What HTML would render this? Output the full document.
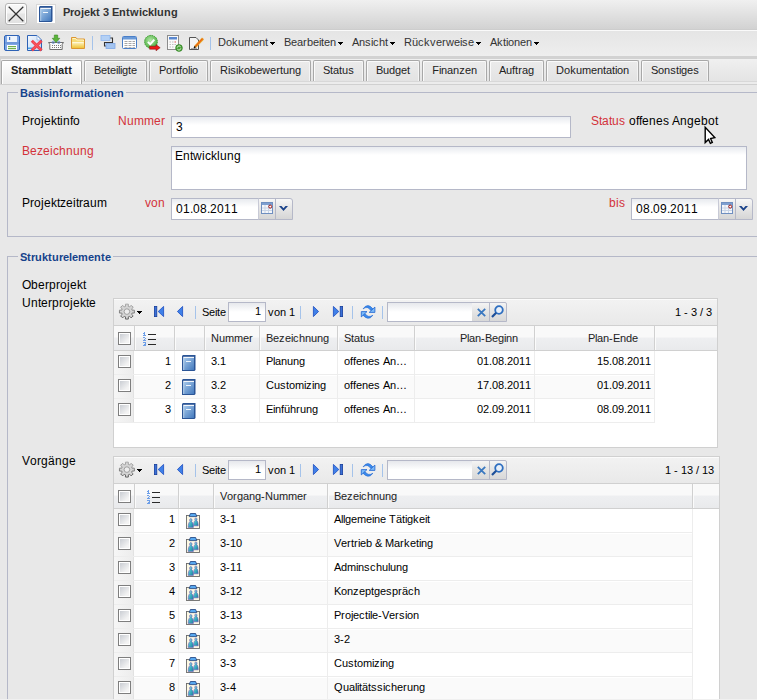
<!DOCTYPE html>
<html><head><meta charset="utf-8"><style>
*{box-sizing:border-box}
html,body{margin:0;padding:0}
body{width:757px;height:700px;overflow:hidden;position:relative;background:#e8e8e8;font-family:"Liberation Sans",sans-serif;font-size:12px;color:#000}
.a{position:absolute}
.t{position:absolute;white-space:nowrap;line-height:14px;font-size:12px}
.s{position:absolute;white-space:nowrap;line-height:13px;font-size:11px}
.b{font-weight:bold}
.red{color:#d3323a}
.r{text-align:right}
svg{position:absolute;overflow:visible}
i{display:inline-block;font-style:normal}
.w0{width:0px}.w1{width:1px}.w2{width:2px}.w3{width:3px}.w4{width:4px}.w5{width:5px}.w6{width:6px}.w7{width:7px}.w8{width:8px}.w9{width:9px}.w10{width:10px}.w11{width:11px}.w12{width:12px}.w13{width:13px}.w14{width:14px}.w15{width:15px}.w16{width:16px}.w17{width:17px}.w18{width:18px}.w19{width:19px}
</style></head><body>
<div class="a" style="left:0px;top:0px;width:757px;height:30px;background:linear-gradient(#f0f0f0,#d2d2d2);border-bottom:1px solid #cdcdcd"></div>
<div class="a" style="left:5px;top:3px;width:22px;height:22px;border:1px solid #b4b4b4;border-radius:3px;box-shadow:inset 0 0 0 1px #fff;background:linear-gradient(#f8f8f8 0,#f2f2f2 45%,#e6e6e6 50%,#e2e2e2 100%)"></div>
<svg style="left:5px;top:3px" width="22" height="22" viewBox="0 0 22 22"><path d="M3.7 3.7L18.3 18.3M18.3 3.7L3.7 18.3" stroke="#333" stroke-width="1.25"/></svg>
<div class="a" style="left:36px;top:4px;width:20px;height:20px;background:#fff;border:1px solid #d8d8d8"></div>
<svg style="left:39px;top:6px" width="14" height="16" viewBox="0 0 14 16"><defs><linearGradient id="bk" x1="0" y1="0" x2="1" y2="1"><stop offset="0" stop-color="#a6c8ea"/><stop offset="1" stop-color="#4379bd"/></linearGradient></defs><path d="M1 0H13.5V15L12.5 16H0V1Z" fill="#2b5596"/><rect x="1.2" y="1.8" width="10.8" height="1.2" fill="#f2f6fb"/><rect x="1.2" y="3" width="10.8" height="12" fill="url(#bk)"/><rect x="1.2" y="3" width="1" height="12" fill="#cfe2f5" opacity="0.7"/><rect x="4" y="6" width="5" height="1" fill="#eef5fc"/></svg>
<div class="s b" style="left:63px;top:6px;color:#333"><i class=w7>P</i><i class=w4>r</i><i class=w7>o</i><i class=w3>j</i><i class=w6>e</i><i class=w6>k</i><i class=w4>t</i><i class=w3> </i><i class=w6>3</i><i class=w3> </i><i class=w7>E</i><i class=w7>n</i><i class=w4>t</i><i class=w9>w</i><i class=w3>i</i><i class=w6>c</i><i class=w6>k</i><i class=w3>l</i><i class=w7>u</i><i class=w7>n</i><i class=w7>g</i></div>
<div class="a" style="left:0px;top:30px;width:757px;height:26px;border-top:1px solid #fafafa;background:linear-gradient(#e5e5e5,#eeeeee)"></div>
<div class="a" style="left:0px;top:56px;width:757px;height:3px;background:#d2d2d2"></div>
<svg style="left:4px;top:35px" width="16" height="16" viewBox="0 0 16 16"><rect x="0.5" y="0.5" width="15" height="15" rx="1.5" fill="#7fa7e4" stroke="#2e62b5"/><rect x="3" y="1" width="10" height="6" fill="#eef4fc"/><rect x="5" y="2" width="1.2" height="3" fill="#3a6fc0"/><rect x="1" y="7" width="14" height="2" fill="#6f98da"/><rect x="3" y="10" width="10" height="5" fill="#ffffff"/><rect x="4" y="11" width="8" height="1.2" fill="#6fb04c"/><rect x="4" y="13" width="8" height="1.2" fill="#6fb04c"/></svg>
<svg style="left:27px;top:35px" width="16" height="16" viewBox="0 0 16 16"><defs><linearGradient id="dg" x1="0" y1="0" x2="1" y2="1"><stop offset="0" stop-color="#f4f8fe"/><stop offset="1" stop-color="#bcd6f4"/></linearGradient></defs><path d="M0.5 0.5H10L14.5 5V15.5H0.5Z" fill="url(#dg)" stroke="#2e62b5"/><path d="M10 0.8V5H14.2Z" fill="#ffffff" stroke="#8fb2e2" stroke-width="0.8"/><rect x="1" y="12.5" width="8" height="1.5" fill="#4aa3e8"/><path d="M4.8 5.8L14.6 15.4M14.6 5.8L4.8 15.4" stroke="#f2434f" stroke-width="3"/><path d="M6 7L13.4 14.2M13.4 7L6 14.2" stroke="#ff7a82" stroke-width="0.8" opacity="0.6"/></svg>
<svg style="left:48px;top:35px" width="16" height="15" viewBox="0 0 16 15"><path d="M0.5 7.5H15.5L14.2 9.3V14.5H1.8V9.3Z" fill="#fbfbfb" stroke="#6e6e6e"/><g fill="#7a7a7a"><rect x="4" y="10" width="1" height="1"/><rect x="6" y="10" width="1" height="1"/><rect x="8" y="10" width="1" height="1"/><rect x="10" y="10" width="1" height="1"/><rect x="12" y="10" width="1" height="1"/><rect x="4" y="12" width="1" height="1"/><rect x="6" y="12" width="1" height="1"/><rect x="8" y="12" width="1" height="1"/><rect x="10" y="12" width="1" height="1"/><rect x="12" y="12" width="1" height="1"/></g><circle cx="5.3" cy="7.4" r="1.2" fill="none" stroke="#5a8ad0" stroke-width="0.8"/><circle cx="10.7" cy="7.4" r="1.2" fill="none" stroke="#5a8ad0" stroke-width="0.8"/><path d="M6.3 0H9.7V3.3H11.8L8 7.5L4.2 3.3H6.3Z" fill="#5bb43a" stroke="#3a8a22" stroke-width="0.6"/></svg>
<svg style="left:71px;top:37px" width="14" height="13" viewBox="0 0 14 13"><defs><linearGradient id="fg" x1="0" y1="0" x2="0" y2="1"><stop offset="0" stop-color="#fdf3c0"/><stop offset="1" stop-color="#efc43a"/></linearGradient></defs><path d="M0.5 0.5H5L6.2 2H13.5V11.5H0.5Z" fill="#f6dc7a" stroke="#dc9632"/><path d="M1.5 1.5H4.6L5.6 3H12.5V4" fill="none" stroke="#fff6d0" stroke-width="0.9"/><path d="M1 5.2H13V11H1Z" fill="url(#fg)"/><path d="M1.5 5.6H12.5" stroke="#fffbe6" stroke-width="0.9"/></svg>
<div class="a" style="left:92px;top:36px;width:1px;height:14px;background:#a5c3ea"></div>
<svg style="left:100px;top:35px" width="16" height="14" viewBox="0 0 16 14"><path d="M10 3H12.5V7.5H4.5V11H6" fill="none" stroke="#333" stroke-width="1.1"/><rect x="1" y="0.5" width="9" height="5" fill="#b3d0f5" stroke="#8fb6ee" stroke-width="0.8"/><rect x="6" y="8.5" width="9" height="5" fill="#a3c4f0" stroke="#7fa8e6" stroke-width="0.8"/></svg>
<svg style="left:122px;top:36px" width="15" height="13" viewBox="0 0 15 13"><rect x="0.5" y="0.5" width="14" height="12" rx="1" fill="#fff" stroke="#4a7fc8"/><rect x="1" y="1" width="13" height="2.5" fill="#6a9ad8"/><g fill="#a8a8a8"><rect x="2.5" y="5" width="3" height="1"/><rect x="6.5" y="5" width="3" height="1"/><rect x="10.5" y="5" width="2.5" height="1"/><rect x="2.5" y="7" width="3" height="1"/><rect x="6.5" y="7" width="3" height="1"/><rect x="10.5" y="7" width="2.5" height="1"/><rect x="2.5" y="9" width="3" height="1"/><rect x="6.5" y="9" width="3" height="1"/><rect x="10.5" y="9" width="2.5" height="1"/><rect x="2.5" y="11" width="3" height="0.8"/><rect x="6.5" y="11" width="3" height="0.8"/><rect x="10.5" y="11" width="2.5" height="0.8"/></g></svg>
<svg style="left:144px;top:35px" width="17" height="16" viewBox="0 0 17 16"><defs><radialGradient id="cg" cx="0.45" cy="0.4" r="0.6"><stop offset="0" stop-color="#b4e8a8"/><stop offset="1" stop-color="#4fb043"/></radialGradient></defs><circle cx="7" cy="6.8" r="6.4" fill="url(#cg)" stroke="#3a9c2c" stroke-width="1" stroke-dasharray="1.6 0.7"/><path d="M3.9 6.9L6.2 9.2L10.3 4.6" fill="none" stroke="#fff" stroke-width="2"/><path d="M5.6 11.2H12V9.6L16.2 12.7L12 15.8V14.2H5.6Z" fill="#ee1a1a" stroke="#7a0a0a" stroke-width="0.5"/></svg>
<svg style="left:167px;top:35px" width="16" height="16" viewBox="0 0 16 16"><rect x="0.5" y="0.5" width="11" height="14" fill="#fafafa" stroke="#8c8c8c"/><rect x="2" y="2" width="8" height="2.5" fill="#5a88d0"/><g fill="#c0c0c0"><rect x="2.5" y="6.5" width="1.5" height="1"/><rect x="5" y="6.5" width="1.5" height="1"/><rect x="2.5" y="9" width="1.5" height="1"/><rect x="5" y="9" width="1.5" height="1"/><rect x="7.5" y="9" width="1.5" height="1"/><rect x="2.5" y="11.5" width="1.5" height="1"/><rect x="5" y="11.5" width="1.5" height="1"/></g><rect x="7.5" y="6.5" width="1.5" height="1" fill="#e05050"/><circle cx="12" cy="13" r="3.4" fill="#48a236" stroke="#2c7a1e" stroke-width="0.6"/><path d="M10.2 12.6A1.9 1.9 0 0 1 13.6 11.8M13.8 13.4A1.9 1.9 0 0 1 10.4 14.2" fill="none" stroke="#f0faea" stroke-width="0.9"/></svg>
<svg style="left:189px;top:37px" width="15" height="14" viewBox="0 0 15 14"><path d="M0.5 0.5H7L9.5 3V12.5H0.5Z" fill="#f4f4f4" stroke="#555"/><path d="M2 11.5H8" stroke="#aaa"/><path d="M6 10L14 1.5" stroke="#e8a020" stroke-width="2.6"/><path d="M6.2 9.6L13.6 1.7" stroke="#f04010" stroke-width="1"/><path d="M5.2 11L6.2 9.5" stroke="#111" stroke-width="1.5"/></svg>
<div class="a" style="left:210px;top:37px;width:1px;height:13px;background:#a5c3ea"></div>
<div class="s" style="left:218px;top:36px;color:#333"><i class=w8>D</i><i class=w6>o</i><i class=w6>k</i><i class=w6>u</i><i class=w9>m</i><i class=w6>e</i><i class=w6>n</i><i class=w3>t</i></div>
<svg style="left:270px;top:42px" width="5" height="3" viewBox="0 0 5 3"><g shape-rendering="crispEdges" fill="#000"><rect x="0" y="0" width="5" height="1"/><rect x="1" y="1" width="3" height="1"/><rect x="2" y="2" width="1" height="1"/></g></svg>
<div class="s" style="left:284px;top:36px;color:#333"><i class=w7>B</i><i class=w6>e</i><i class=w6>a</i><i class=w4>r</i><i class=w6>b</i><i class=w6>e</i><i class=w2>i</i><i class=w3>t</i><i class=w6>e</i><i class=w6>n</i></div>
<svg style="left:338px;top:42px" width="5" height="3" viewBox="0 0 5 3"><g shape-rendering="crispEdges" fill="#000"><rect x="0" y="0" width="5" height="1"/><rect x="1" y="1" width="3" height="1"/><rect x="2" y="2" width="1" height="1"/></g></svg>
<div class="s" style="left:352px;top:36px;color:#333"><i class=w7>A</i><i class=w6>n</i><i class=w6>s</i><i class=w2>i</i><i class=w6>c</i><i class=w6>h</i><i class=w3>t</i></div>
<svg style="left:390px;top:42px" width="5" height="3" viewBox="0 0 5 3"><g shape-rendering="crispEdges" fill="#000"><rect x="0" y="0" width="5" height="1"/><rect x="1" y="1" width="3" height="1"/><rect x="2" y="2" width="1" height="1"/></g></svg>
<div class="s" style="left:404px;top:36px;color:#333"><i class=w8>R</i><i class=w6>ü</i><i class=w6>c</i><i class=w6>k</i><i class=w6>v</i><i class=w6>e</i><i class=w4>r</i><i class=w8>w</i><i class=w6>e</i><i class=w2>i</i><i class=w6>s</i><i class=w6>e</i></div>
<svg style="left:476px;top:42px" width="5" height="3" viewBox="0 0 5 3"><g shape-rendering="crispEdges" fill="#000"><rect x="0" y="0" width="5" height="1"/><rect x="1" y="1" width="3" height="1"/><rect x="2" y="2" width="1" height="1"/></g></svg>
<div class="s" style="left:490px;top:36px;color:#333"><i class=w7>A</i><i class=w6>k</i><i class=w3>t</i><i class=w2>i</i><i class=w6>o</i><i class=w6>n</i><i class=w6>e</i><i class=w6>n</i></div>
<svg style="left:534px;top:42px" width="5" height="3" viewBox="0 0 5 3"><g shape-rendering="crispEdges" fill="#000"><rect x="0" y="0" width="5" height="1"/><rect x="1" y="1" width="3" height="1"/><rect x="2" y="2" width="1" height="1"/></g></svg>
<div class="a" style="left:0px;top:59px;width:757px;height:22px;background:linear-gradient(#f0f0f0,#e4e4e4)"></div>
<div class="a" style="left:0px;top:81px;width:757px;height:1px;background:#d8d8d8"></div>
<div class="a" style="left:0px;top:82px;width:757px;height:2px;background:#ececec"></div>
<div class="a" style="left:0px;top:84px;width:757px;height:1px;background:#d0d0d0"></div>
<div class="a" style="left:0px;top:59px;width:1px;height:26px;background:#d4d4d4"></div>
<div class="a" style="left:1px;top:60px;width:81px;height:24px;border:1px solid #a8a8a8;border-bottom:none;border-radius:2px 2px 0 0;box-shadow:inset 1px 1px 0 #fff,inset -1px 0 0 #fff;background:linear-gradient(#ffffff,#ebebeb)"></div>
<div class="s b" style="left:1px;top:64px;width:81px;text-align:center;color:#222"><i class=w7>S</i><i class=w4>t</i><i class=w6>a</i><i class=w10>m</i><i class=w10>m</i><i class=w7>b</i><i class=w3>l</i><i class=w6>a</i><i class=w4>t</i><i class=w4>t</i></div>
<div class="a" style="left:84px;top:60px;width:63px;height:21px;border:1px solid #a8a8a8;border-bottom:none;border-radius:2px 2px 0 0;box-shadow:inset 1px 1px 0 #fafafa,inset -1px 0 0 #f4f4f4;background:linear-gradient(#ebebeb,#e3e3e3)"></div>
<div class="s" style="left:84px;top:64px;width:63px;text-align:center;color:#222"><i class=w7>B</i><i class=w6>e</i><i class=w3>t</i><i class=w6>e</i><i class=w2>i</i><i class=w2>l</i><i class=w2>i</i><i class=w6>g</i><i class=w3>t</i><i class=w6>e</i></div>
<div class="a" style="left:149px;top:60px;width:59px;height:21px;border:1px solid #a8a8a8;border-bottom:none;border-radius:2px 2px 0 0;box-shadow:inset 1px 1px 0 #fafafa,inset -1px 0 0 #f4f4f4;background:linear-gradient(#ebebeb,#e3e3e3)"></div>
<div class="s" style="left:149px;top:64px;width:59px;text-align:center;color:#222"><i class=w7>P</i><i class=w6>o</i><i class=w4>r</i><i class=w3>t</i><i class=w3>f</i><i class=w6>o</i><i class=w2>l</i><i class=w2>i</i><i class=w6>o</i></div>
<div class="a" style="left:210px;top:60px;width:101px;height:21px;border:1px solid #a8a8a8;border-bottom:none;border-radius:2px 2px 0 0;box-shadow:inset 1px 1px 0 #fafafa,inset -1px 0 0 #f4f4f4;background:linear-gradient(#ebebeb,#e3e3e3)"></div>
<div class="s" style="left:210px;top:64px;width:101px;text-align:center;color:#222"><i class=w8>R</i><i class=w2>i</i><i class=w6>s</i><i class=w2>i</i><i class=w6>k</i><i class=w6>o</i><i class=w6>b</i><i class=w6>e</i><i class=w8>w</i><i class=w6>e</i><i class=w4>r</i><i class=w3>t</i><i class=w6>u</i><i class=w6>n</i><i class=w6>g</i></div>
<div class="a" style="left:313px;top:60px;width:51px;height:21px;border:1px solid #a8a8a8;border-bottom:none;border-radius:2px 2px 0 0;box-shadow:inset 1px 1px 0 #fafafa,inset -1px 0 0 #f4f4f4;background:linear-gradient(#ebebeb,#e3e3e3)"></div>
<div class="s" style="left:313px;top:64px;width:51px;text-align:center;color:#222"><i class=w7>S</i><i class=w3>t</i><i class=w6>a</i><i class=w3>t</i><i class=w6>u</i><i class=w6>s</i></div>
<div class="a" style="left:366px;top:60px;width:54px;height:21px;border:1px solid #a8a8a8;border-bottom:none;border-radius:2px 2px 0 0;box-shadow:inset 1px 1px 0 #fafafa,inset -1px 0 0 #f4f4f4;background:linear-gradient(#ebebeb,#e3e3e3)"></div>
<div class="s" style="left:366px;top:64px;width:54px;text-align:center;color:#222"><i class=w7>B</i><i class=w6>u</i><i class=w6>d</i><i class=w6>g</i><i class=w6>e</i><i class=w3>t</i></div>
<div class="a" style="left:422px;top:60px;width:65px;height:21px;border:1px solid #a8a8a8;border-bottom:none;border-radius:2px 2px 0 0;box-shadow:inset 1px 1px 0 #fafafa,inset -1px 0 0 #f4f4f4;background:linear-gradient(#ebebeb,#e3e3e3)"></div>
<div class="s" style="left:422px;top:64px;width:65px;text-align:center;color:#222"><i class=w7>F</i><i class=w2>i</i><i class=w6>n</i><i class=w6>a</i><i class=w6>n</i><i class=w6>z</i><i class=w6>e</i><i class=w6>n</i></div>
<div class="a" style="left:489px;top:60px;width:55px;height:21px;border:1px solid #a8a8a8;border-bottom:none;border-radius:2px 2px 0 0;box-shadow:inset 1px 1px 0 #fafafa,inset -1px 0 0 #f4f4f4;background:linear-gradient(#ebebeb,#e3e3e3)"></div>
<div class="s" style="left:489px;top:64px;width:55px;text-align:center;color:#222"><i class=w7>A</i><i class=w6>u</i><i class=w3>f</i><i class=w3>t</i><i class=w4>r</i><i class=w6>a</i><i class=w6>g</i></div>
<div class="a" style="left:546px;top:60px;width:93px;height:21px;border:1px solid #a8a8a8;border-bottom:none;border-radius:2px 2px 0 0;box-shadow:inset 1px 1px 0 #fafafa,inset -1px 0 0 #f4f4f4;background:linear-gradient(#ebebeb,#e3e3e3)"></div>
<div class="s" style="left:546px;top:64px;width:93px;text-align:center;color:#222"><i class=w8>D</i><i class=w6>o</i><i class=w6>k</i><i class=w6>u</i><i class=w9>m</i><i class=w6>e</i><i class=w6>n</i><i class=w3>t</i><i class=w6>a</i><i class=w3>t</i><i class=w2>i</i><i class=w6>o</i><i class=w6>n</i></div>
<div class="a" style="left:641px;top:60px;width:68px;height:21px;border:1px solid #a8a8a8;border-bottom:none;border-radius:2px 2px 0 0;box-shadow:inset 1px 1px 0 #fafafa,inset -1px 0 0 #f4f4f4;background:linear-gradient(#ebebeb,#e3e3e3)"></div>
<div class="s" style="left:641px;top:64px;width:68px;text-align:center;color:#222"><i class=w7>S</i><i class=w6>o</i><i class=w6>n</i><i class=w6>s</i><i class=w3>t</i><i class=w2>i</i><i class=w6>g</i><i class=w6>e</i><i class=w6>s</i></div>
<div class="a" style="left:7px;top:92px;width:760px;height:145px;border:1px solid #b5b8c8;border-right:none"></div>
<div class="s b" style="left:18px;top:87px;padding:0 2px;background:#e8e8e8;color:#15428b"><i class=w8>B</i><i class=w6>a</i><i class=w6>s</i><i class=w3>i</i><i class=w6>s</i><i class=w3>i</i><i class=w7>n</i><i class=w4>f</i><i class=w7>o</i><i class=w4>r</i><i class=w10>m</i><i class=w6>a</i><i class=w4>t</i><i class=w3>i</i><i class=w7>o</i><i class=w7>n</i><i class=w6>e</i><i class=w7>n</i></div>
<div class="t " style="left:22px;top:114px;"><i class=w8>P</i><i class=w4>r</i><i class=w7>o</i><i class=w3>j</i><i class=w7>e</i><i class=w6>k</i><i class=w3>t</i><i class=w3>i</i><i class=w7>n</i><i class=w3>f</i><i class=w7>o</i></div>
<div class="t red" style="left:118px;top:114px;"><i class=w9>N</i><i class=w7>u</i><i class=w10>m</i><i class=w10>m</i><i class=w7>e</i><i class=w4>r</i></div>
<div class="a" style="left:171px;top:116px;width:400px;height:22px;border:1px solid #b5b8c8;background:linear-gradient(#e8ebef,#fff 8px)"></div>
<div class="t " style="left:176px;top:120px;"><i class=w7>3</i></div>
<div class="t red" style="left:591px;top:114px;"><i class=w8>S</i><i class=w3>t</i><i class=w7>a</i><i class=w3>t</i><i class=w7>u</i><i class=w6>s</i></div>
<div class="t " style="left:629px;top:114px;"><i class=w7>o</i><i class=w3>f</i><i class=w3>f</i><i class=w7>e</i><i class=w7>n</i><i class=w7>e</i><i class=w6>s</i><i class=w3> </i><i class=w8>A</i><i class=w7>n</i><i class=w7>g</i><i class=w7>e</i><i class=w7>b</i><i class=w7>o</i><i class=w3>t</i></div>
<div class="t red" style="left:22px;top:144px;"><i class=w8>B</i><i class=w7>e</i><i class=w6>z</i><i class=w7>e</i><i class=w3>i</i><i class=w6>c</i><i class=w7>h</i><i class=w7>n</i><i class=w7>u</i><i class=w7>n</i><i class=w7>g</i></div>
<div class="a" style="left:171px;top:146px;width:576px;height:44px;border:1px solid #b5b8c8;background:linear-gradient(#e8ebef,#fff 8px)"></div>
<div class="t " style="left:175px;top:149px;"><i class=w8>E</i><i class=w7>n</i><i class=w3>t</i><i class=w9>w</i><i class=w3>i</i><i class=w6>c</i><i class=w6>k</i><i class=w3>l</i><i class=w7>u</i><i class=w7>n</i><i class=w7>g</i></div>
<div class="t " style="left:22px;top:196px;"><i class=w8>P</i><i class=w4>r</i><i class=w7>o</i><i class=w3>j</i><i class=w7>e</i><i class=w6>k</i><i class=w3>t</i><i class=w6>z</i><i class=w7>e</i><i class=w3>i</i><i class=w3>t</i><i class=w4>r</i><i class=w7>a</i><i class=w7>u</i><i class=w10>m</i></div>
<div class="t red" style="left:145px;top:196px;"><i class=w6>v</i><i class=w7>o</i><i class=w7>n</i></div>
<div class="t red" style="left:609px;top:196px;"><i class=w7>b</i><i class=w3>i</i><i class=w6>s</i></div>
<div class="a" style="left:171px;top:198px;width:88px;height:22px;border:1px solid #b5b8c8;background:linear-gradient(#e8ebef,#fff 8px)"></div>
<div class="t " style="left:176px;top:202px;"><i class=w7>0</i><i class=w7>1</i><i class=w3>.</i><i class=w7>0</i><i class=w7>8</i><i class=w3>.</i><i class=w7>2</i><i class=w7>0</i><i class=w7>1</i><i class=w7>1</i></div>
<div class="a" style="left:258px;top:198px;width:18px;height:22px;border:1px solid #b5b8c8;border-left:1px solid #c8cad6;background:linear-gradient(#f7f7f7,#e6e6e6 45%,#d6d6d6)"></div>
<svg style="left:261px;top:202px" width="12" height="12" viewBox="0 0 12 12"><rect x="0.5" y="0.5" width="11" height="11" fill="#f4f6fa" stroke="#6f8fc0"/><rect x="1" y="1" width="10" height="2" fill="#7d9fd0"/><g stroke="#c8d4e6" stroke-width="1"><path d="M4 3V11M7.5 3V11M1 6H11M1 8.5H11"/></g><circle cx="9.2" cy="4.6" r="1.5" fill="#fff" stroke="#9a1010" stroke-width="1"/></svg>
<div class="a" style="left:275px;top:198px;width:18px;height:22px;border:1px solid #b5b8c8;border-radius:0 3px 0 0;background:linear-gradient(#f7f7f7,#e6e6e6 45%,#d6d6d6)"></div>
<svg style="left:279px;top:206px" width="9" height="5" viewBox="0 0 9 5"><path d="M0 0H2.5L4.5 2.2L6.5 0H9L4.5 5Z" fill="#1a428a"/></svg>
<div class="a" style="left:631px;top:198px;width:88px;height:22px;border:1px solid #b5b8c8;background:linear-gradient(#e8ebef,#fff 8px)"></div>
<div class="t " style="left:636px;top:202px;"><i class=w7>0</i><i class=w7>8</i><i class=w3>.</i><i class=w7>0</i><i class=w7>9</i><i class=w3>.</i><i class=w7>2</i><i class=w7>0</i><i class=w7>1</i><i class=w7>1</i></div>
<div class="a" style="left:718px;top:198px;width:18px;height:22px;border:1px solid #b5b8c8;border-left:1px solid #c8cad6;background:linear-gradient(#f7f7f7,#e6e6e6 45%,#d6d6d6)"></div>
<svg style="left:721px;top:202px" width="12" height="12" viewBox="0 0 12 12"><rect x="0.5" y="0.5" width="11" height="11" fill="#f4f6fa" stroke="#6f8fc0"/><rect x="1" y="1" width="10" height="2" fill="#7d9fd0"/><g stroke="#c8d4e6" stroke-width="1"><path d="M4 3V11M7.5 3V11M1 6H11M1 8.5H11"/></g><circle cx="9.2" cy="4.6" r="1.5" fill="#fff" stroke="#9a1010" stroke-width="1"/></svg>
<div class="a" style="left:735px;top:198px;width:18px;height:22px;border:1px solid #b5b8c8;border-radius:0 3px 0 0;background:linear-gradient(#f7f7f7,#e6e6e6 45%,#d6d6d6)"></div>
<svg style="left:739px;top:206px" width="9" height="5" viewBox="0 0 9 5"><path d="M0 0H2.5L4.5 2.2L6.5 0H9L4.5 5Z" fill="#1a428a"/></svg>
<svg style="left:704px;top:126px" width="13" height="19" viewBox="0 0 13 19"><path d="M1.2 1.2V16.6L4.5 13.4L6.4 17.3L8.3 16.5L6.6 12.6L10.8 11.6Z" fill="#fff" stroke="#000" stroke-width="1.4" stroke-linejoin="miter"/></svg>
<div class="a" style="left:7px;top:256px;width:760px;height:460px;border:1px solid #b5b8c8;border-right:none"></div>
<div class="s b" style="left:18px;top:251px;padding:0 2px;background:#e8e8e8;color:#15428b"><i class=w7>S</i><i class=w4>t</i><i class=w4>r</i><i class=w7>u</i><i class=w6>k</i><i class=w4>t</i><i class=w7>u</i><i class=w4>r</i><i class=w6>e</i><i class=w3>l</i><i class=w6>e</i><i class=w10>m</i><i class=w6>e</i><i class=w7>n</i><i class=w4>t</i><i class=w6>e</i></div>
<div class="t " style="left:22px;top:278px;"><i class=w9>O</i><i class=w7>b</i><i class=w7>e</i><i class=w4>r</i><i class=w7>p</i><i class=w4>r</i><i class=w7>o</i><i class=w3>j</i><i class=w7>e</i><i class=w6>k</i><i class=w3>t</i></div>
<div class="t " style="left:22px;top:296px;"><i class=w9>U</i><i class=w7>n</i><i class=w3>t</i><i class=w7>e</i><i class=w4>r</i><i class=w7>p</i><i class=w4>r</i><i class=w7>o</i><i class=w3>j</i><i class=w7>e</i><i class=w6>k</i><i class=w3>t</i><i class=w7>e</i></div>
<div class="t " style="left:22px;top:454px;"><i class=w8>V</i><i class=w7>o</i><i class=w4>r</i><i class=w7>g</i><i class=w7>ä</i><i class=w7>n</i><i class=w7>g</i><i class=w7>e</i></div>
<div class="a" style="left:113px;top:298px;width:605px;height:462px;border:1px solid #d0d0d0;background:#fff"></div>
<div class="a" style="left:114px;top:299px;width:603px;height:27px;border-top:1px solid #fbfbfb;background:linear-gradient(#f2f2f2,#e9e9e9);border-bottom:1px solid #d0d0d0"></div>
<svg style="left:119px;top:304px" width="16" height="16" viewBox="0 0 16 16"><defs><linearGradient id="gg" x1="0" y1="0" x2="0" y2="1"><stop offset="0" stop-color="#aaaaaa"/><stop offset="1" stop-color="#5e5e5e"/></linearGradient></defs><g transform="translate(7.9,7.6)"><path d="M4.99 -2.07 L5.22 -1.40 L7.46 -1.45 L7.46 1.45 L5.22 1.40 L4.99 2.07 L4.68 2.70 L6.30 4.25 L4.25 6.30 L2.70 4.68 L2.07 4.99 L1.40 5.22 L1.45 7.46 L-1.45 7.46 L-1.40 5.22 L-2.07 4.99 L-2.70 4.68 L-4.25 6.30 L-6.30 4.25 L-4.68 2.70 L-4.99 2.07 L-5.22 1.40 L-7.46 1.45 L-7.46 -1.45 L-5.22 -1.40 L-4.99 -2.07 L-4.68 -2.70 L-6.30 -4.25 L-4.25 -6.30 L-2.70 -4.68 L-2.07 -4.99 L-1.40 -5.22 L-1.45 -7.46 L1.45 -7.46 L1.40 -5.22 L2.07 -4.99 L2.70 -4.68 L4.25 -6.30 L6.30 -4.25 L4.68 -2.70Z" fill="#d4d4d4" stroke="url(#gg)" stroke-width="1"/><circle r="2.8" fill="#ededed" stroke="#a0a0a0" stroke-width="1"/></g></svg>
<svg style="left:137px;top:311px" width="5" height="3" viewBox="0 0 5 3"><g shape-rendering="crispEdges" fill="#000"><rect x="0" y="0" width="5" height="1"/><rect x="1" y="1" width="3" height="1"/><rect x="2" y="2" width="1" height="1"/></g></svg>
<svg style="left:154px;top:306px" width="10" height="11" viewBox="0 0 10 11"><rect x="0.4" y="0.4" width="2.4" height="10.2" fill="#3a70d8" stroke="#173f9c" stroke-width="0.8"/><path d="M9.6 0.4V10.6L4.2 5.5Z" fill="#3f80e8" stroke="#1c4cc0" stroke-width="0.8" stroke-linejoin="round"/></svg>
<svg style="left:177px;top:306px" width="6" height="11" viewBox="0 0 6 11"><path d="M5.6 0.4V10.6L0.4 5.5Z" fill="#3f80e8" stroke="#1c4cc0" stroke-width="0.8" stroke-linejoin="round"/></svg>
<div class="a" style="left:195px;top:306px;width:1px;height:13px;background:#a5c3ea"></div>
<div class="s " style="left:202px;top:306px;"><i class=w7>S</i><i class=w6>e</i><i class=w2>i</i><i class=w3>t</i><i class=w6>e</i></div>
<div class="a" style="left:228px;top:302px;width:38px;height:20px;border:1px solid #b5b8c8;background:linear-gradient(#e6e8ec,#fff 9px)"></div>
<div class="s " style="right:496px;top:305px;"><i class=w6>1</i></div>
<div class="s " style="left:268px;top:306px;"><i class=w6>v</i><i class=w6>o</i><i class=w6>n</i><i class=w3> </i><i class=w6>1</i></div>
<div class="a" style="left:300px;top:306px;width:1px;height:13px;background:#a5c3ea"></div>
<svg style="left:313px;top:306px" width="6" height="11" viewBox="0 0 6 11"><path d="M0.4 0.4V10.6L5.6 5.5Z" fill="#3f80e8" stroke="#1c4cc0" stroke-width="0.8" stroke-linejoin="round"/></svg>
<svg style="left:333px;top:306px" width="10" height="11" viewBox="0 0 10 11"><path d="M0.4 0.4V10.6L5.8 5.5Z" fill="#3f80e8" stroke="#1c4cc0" stroke-width="0.8" stroke-linejoin="round"/><rect x="7.2" y="0.4" width="2.4" height="10.2" fill="#3a70d8" stroke="#173f9c" stroke-width="0.8"/></svg>
<div class="a" style="left:352px;top:306px;width:1px;height:13px;background:#a5c3ea"></div>
<svg style="left:359px;top:303px" width="17" height="17" viewBox="0 0 17 17"><path d="M4 5.9Q8.8 -1 14.4 6.4L11.8 7.6Q8.8 2.4 4 5.9Z" fill="#3a8aec" stroke="#1f64d0" stroke-width="0.6"/><path d="M15.9 4.1V9.4H10.2Z" fill="#7cbaf8" stroke="#1f64d0" stroke-width="0.8" stroke-linejoin="round"/><path d="M13.9 12.3Q9 19 2.8 10.8L5.6 10.2Q9.2 15.4 13.9 12.3Z" fill="#3a8aec" stroke="#1f64d0" stroke-width="0.6"/><path d="M2.3 13.9V8.6H8Z" fill="#7cbaf8" stroke="#1f64d0" stroke-width="0.8" stroke-linejoin="round"/></svg>
<div class="a" style="left:382px;top:306px;width:1px;height:13px;background:#a5c3ea"></div>
<div class="a" style="left:387px;top:302px;width:86px;height:20px;border:1px solid #b5b8c8;background:linear-gradient(#e6e8ec,#fff 9px)"></div>
<div class="a" style="left:472px;top:302px;width:18px;height:20px;border:1px solid #b5b8c8;border-left:none;background:linear-gradient(#f4f4f4,#e4e4e4 50%,#d8d8d8)"></div>
<svg style="left:477px;top:308px" width="9" height="9" viewBox="0 0 9 9"><path d="M0.8 0.8L8.2 8.2M8.2 0.8L0.8 8.2" stroke="#3a78c0" stroke-width="1.8"/></svg>
<div class="a" style="left:489px;top:302px;width:18px;height:20px;border:1px solid #b5b8c8;border-radius:0 2px 0 0;background:linear-gradient(#f4f4f4,#e4e4e4 50%,#d8d8d8)"></div>
<svg style="left:491px;top:305px" width="13" height="13" viewBox="0 0 13 13"><circle cx="8" cy="5" r="3.8" fill="#e8f0fa" stroke="#2f6fc0" stroke-width="1.8"/><path d="M5.2 7.8L1 12" stroke="#1d4f9a" stroke-width="2.2"/></svg>
<div class="s " style="right:45px;top:306px;"><i class=w6>1</i><i class=w3> </i><i class=w4>-</i><i class=w3> </i><i class=w6>3</i><i class=w3> </i><i class=w3>/</i><i class=w3> </i><i class=w6>3</i></div>
<div class="a" style="left:114px;top:326px;width:603px;height:25px;background:linear-gradient(#f9f9f9 0,#f9f9f9 46%,#eeeff1 50%,#e9eaec 100%);border-bottom:1px solid #d0d0d0"></div>
<div class="a" style="left:134px;top:326px;width:1px;height:24px;background:#d0d0d0"></div>
<div class="a" style="left:135px;top:326px;width:1px;height:24px;background:#fbfbfb"></div>
<div class="a" style="left:174px;top:326px;width:1px;height:24px;background:#d0d0d0"></div>
<div class="a" style="left:175px;top:326px;width:1px;height:24px;background:#fbfbfb"></div>
<div class="a" style="left:204px;top:326px;width:1px;height:24px;background:#d0d0d0"></div>
<div class="a" style="left:205px;top:326px;width:1px;height:24px;background:#fbfbfb"></div>
<div class="a" style="left:259px;top:326px;width:1px;height:24px;background:#d0d0d0"></div>
<div class="a" style="left:260px;top:326px;width:1px;height:24px;background:#fbfbfb"></div>
<div class="s " style="left:211px;top:332px;color:#222"><i class=w8>N</i><i class=w6>u</i><i class=w9>m</i><i class=w9>m</i><i class=w6>e</i><i class=w4>r</i></div>
<div class="a" style="left:337px;top:326px;width:1px;height:24px;background:#d0d0d0"></div>
<div class="a" style="left:338px;top:326px;width:1px;height:24px;background:#fbfbfb"></div>
<div class="s " style="left:266px;top:332px;color:#222"><i class=w7>B</i><i class=w6>e</i><i class=w6>z</i><i class=w6>e</i><i class=w2>i</i><i class=w6>c</i><i class=w6>h</i><i class=w6>n</i><i class=w6>u</i><i class=w6>n</i><i class=w6>g</i></div>
<div class="a" style="left:414px;top:326px;width:1px;height:24px;background:#d0d0d0"></div>
<div class="a" style="left:415px;top:326px;width:1px;height:24px;background:#fbfbfb"></div>
<div class="s " style="left:344px;top:332px;color:#222"><i class=w7>S</i><i class=w3>t</i><i class=w6>a</i><i class=w3>t</i><i class=w6>u</i><i class=w6>s</i></div>
<div class="a" style="left:534px;top:326px;width:1px;height:24px;background:#d0d0d0"></div>
<div class="a" style="left:535px;top:326px;width:1px;height:24px;background:#fbfbfb"></div>
<div class="s " style="right:239px;top:332px;color:#222"><i class=w7>P</i><i class=w2>l</i><i class=w6>a</i><i class=w6>n</i><i class=w4>-</i><i class=w7>B</i><i class=w6>e</i><i class=w6>g</i><i class=w2>i</i><i class=w6>n</i><i class=w6>n</i></div>
<div class="a" style="left:654px;top:326px;width:1px;height:24px;background:#d0d0d0"></div>
<div class="a" style="left:655px;top:326px;width:1px;height:24px;background:#fbfbfb"></div>
<div class="s " style="right:119px;top:332px;color:#222"><i class=w7>P</i><i class=w2>l</i><i class=w6>a</i><i class=w6>n</i><i class=w4>-</i><i class=w7>E</i><i class=w6>n</i><i class=w6>d</i><i class=w6>e</i></div>
<div class="a" style="left:118px;top:332px;width:13px;height:13px;border:1px solid #7e7e7e;box-shadow:inset 0 0 0 1px #fff;background:linear-gradient(135deg,#c4c8cf,#f4f4f4 75%)"></div>
<svg style="left:143px;top:332px" width="13" height="14" viewBox="0 0 13 14"><g fill="#6c9ee8" shape-rendering="crispEdges"><rect x="1" y="0" width="1" height="4"/><rect x="0" y="1" width="1" height="1"/><rect x="0" y="3" width="3" height="1"/><rect x="0" y="5" width="2" height="1"/><rect x="2" y="6" width="1" height="1"/><rect x="1" y="7" width="1" height="1"/><rect x="0" y="8" width="3" height="1"/><rect x="0" y="10" width="3" height="1"/><rect x="2" y="11" width="1" height="1"/><rect x="1" y="12" width="2" height="1"/><rect x="0" y="13" width="3" height="1"/></g><g fill="#2a2a2a" shape-rendering="crispEdges"><rect x="5" y="2" width="8" height="1"/><rect x="5" y="7" width="8" height="1"/><rect x="5" y="12" width="8" height="1"/></g></svg>
<div class="a" style="left:114px;top:351px;width:541px;height:24px;background:#fff;border-bottom:1px solid #ededed;border-top:1px solid #fff"></div>
<div class="a" style="left:114px;top:351px;width:20px;height:23px;background:linear-gradient(90deg,#f6f6f6,#ececec)"></div>
<div class="a" style="left:133px;top:351px;width:1px;height:23px;background:#e2e2e2"></div>
<div class="a" style="left:174px;top:351px;width:1px;height:23px;background:#ededed"></div>
<div class="a" style="left:204px;top:351px;width:1px;height:23px;background:#ededed"></div>
<div class="a" style="left:259px;top:351px;width:1px;height:23px;background:#ededed"></div>
<div class="a" style="left:337px;top:351px;width:1px;height:23px;background:#ededed"></div>
<div class="a" style="left:414px;top:351px;width:1px;height:23px;background:#ededed"></div>
<div class="a" style="left:534px;top:351px;width:1px;height:23px;background:#ededed"></div>
<div class="a" style="left:654px;top:351px;width:1px;height:23px;background:#ededed"></div>
<div class="a" style="left:118px;top:355px;width:13px;height:13px;border:1px solid #7e7e7e;box-shadow:inset 0 0 0 1px #fff;background:linear-gradient(135deg,#c4c8cf,#f4f4f4 75%)"></div>
<div class="s " style="right:586px;top:355px;"><i class=w6>1</i></div>
<svg style="left:182px;top:355px" width="14" height="16" viewBox="0 0 14 16"><defs><linearGradient id="bk" x1="0" y1="0" x2="1" y2="1"><stop offset="0" stop-color="#a6c8ea"/><stop offset="1" stop-color="#4379bd"/></linearGradient></defs><path d="M1 0H13.5V15L12.5 16H0V1Z" fill="#2b5596"/><rect x="1.2" y="1.8" width="10.8" height="1.2" fill="#f2f6fb"/><rect x="1.2" y="3" width="10.8" height="12" fill="url(#bk)"/><rect x="1.2" y="3" width="1" height="12" fill="#cfe2f5" opacity="0.7"/><rect x="4" y="6" width="5" height="1" fill="#eef5fc"/></svg>
<div class="s " style="left:211px;top:355px;"><i class=w6>3</i><i class=w3>.</i><i class=w6>1</i></div>
<div class="s " style="left:266px;top:355px;"><i class=w7>P</i><i class=w2>l</i><i class=w6>a</i><i class=w6>n</i><i class=w6>u</i><i class=w6>n</i><i class=w6>g</i></div>
<div class="s " style="left:344px;top:355px;"><i class=w6>o</i><i class=w3>f</i><i class=w3>f</i><i class=w6>e</i><i class=w6>n</i><i class=w6>e</i><i class=w6>s</i><i class=w3> </i><i class=w7>A</i><i class=w6>n</i><i class=w11>…</i></div>
<div class="s " style="right:226px;top:355px;"><i class=w6>0</i><i class=w6>1</i><i class=w3>.</i><i class=w6>0</i><i class=w6>8</i><i class=w3>.</i><i class=w6>2</i><i class=w6>0</i><i class=w6>1</i><i class=w6>1</i></div>
<div class="s " style="right:106px;top:355px;"><i class=w6>1</i><i class=w6>5</i><i class=w3>.</i><i class=w6>0</i><i class=w6>8</i><i class=w3>.</i><i class=w6>2</i><i class=w6>0</i><i class=w6>1</i><i class=w6>1</i></div>
<div class="a" style="left:114px;top:375px;width:541px;height:24px;background:#fafafa;border-bottom:1px solid #ededed;border-top:1px solid #fff"></div>
<div class="a" style="left:114px;top:375px;width:20px;height:23px;background:linear-gradient(90deg,#f6f6f6,#ececec)"></div>
<div class="a" style="left:133px;top:375px;width:1px;height:23px;background:#e2e2e2"></div>
<div class="a" style="left:174px;top:375px;width:1px;height:23px;background:#ededed"></div>
<div class="a" style="left:204px;top:375px;width:1px;height:23px;background:#ededed"></div>
<div class="a" style="left:259px;top:375px;width:1px;height:23px;background:#ededed"></div>
<div class="a" style="left:337px;top:375px;width:1px;height:23px;background:#ededed"></div>
<div class="a" style="left:414px;top:375px;width:1px;height:23px;background:#ededed"></div>
<div class="a" style="left:534px;top:375px;width:1px;height:23px;background:#ededed"></div>
<div class="a" style="left:654px;top:375px;width:1px;height:23px;background:#ededed"></div>
<div class="a" style="left:118px;top:379px;width:13px;height:13px;border:1px solid #7e7e7e;box-shadow:inset 0 0 0 1px #fff;background:linear-gradient(135deg,#c4c8cf,#f4f4f4 75%)"></div>
<div class="s " style="right:586px;top:379px;"><i class=w6>2</i></div>
<svg style="left:182px;top:379px" width="14" height="16" viewBox="0 0 14 16"><defs><linearGradient id="bk" x1="0" y1="0" x2="1" y2="1"><stop offset="0" stop-color="#a6c8ea"/><stop offset="1" stop-color="#4379bd"/></linearGradient></defs><path d="M1 0H13.5V15L12.5 16H0V1Z" fill="#2b5596"/><rect x="1.2" y="1.8" width="10.8" height="1.2" fill="#f2f6fb"/><rect x="1.2" y="3" width="10.8" height="12" fill="url(#bk)"/><rect x="1.2" y="3" width="1" height="12" fill="#cfe2f5" opacity="0.7"/><rect x="4" y="6" width="5" height="1" fill="#eef5fc"/></svg>
<div class="s " style="left:211px;top:379px;"><i class=w6>3</i><i class=w3>.</i><i class=w6>2</i></div>
<div class="s " style="left:266px;top:379px;"><i class=w8>C</i><i class=w6>u</i><i class=w6>s</i><i class=w3>t</i><i class=w6>o</i><i class=w9>m</i><i class=w2>i</i><i class=w6>z</i><i class=w2>i</i><i class=w6>n</i><i class=w6>g</i></div>
<div class="s " style="left:344px;top:379px;"><i class=w6>o</i><i class=w3>f</i><i class=w3>f</i><i class=w6>e</i><i class=w6>n</i><i class=w6>e</i><i class=w6>s</i><i class=w3> </i><i class=w7>A</i><i class=w6>n</i><i class=w11>…</i></div>
<div class="s " style="right:226px;top:379px;"><i class=w6>1</i><i class=w6>7</i><i class=w3>.</i><i class=w6>0</i><i class=w6>8</i><i class=w3>.</i><i class=w6>2</i><i class=w6>0</i><i class=w6>1</i><i class=w6>1</i></div>
<div class="s " style="right:106px;top:379px;"><i class=w6>0</i><i class=w6>1</i><i class=w3>.</i><i class=w6>0</i><i class=w6>9</i><i class=w3>.</i><i class=w6>2</i><i class=w6>0</i><i class=w6>1</i><i class=w6>1</i></div>
<div class="a" style="left:114px;top:399px;width:541px;height:24px;background:#fff;border-bottom:1px solid #ededed;border-top:1px solid #fff"></div>
<div class="a" style="left:114px;top:399px;width:20px;height:23px;background:linear-gradient(90deg,#f6f6f6,#ececec)"></div>
<div class="a" style="left:133px;top:399px;width:1px;height:23px;background:#e2e2e2"></div>
<div class="a" style="left:174px;top:399px;width:1px;height:23px;background:#ededed"></div>
<div class="a" style="left:204px;top:399px;width:1px;height:23px;background:#ededed"></div>
<div class="a" style="left:259px;top:399px;width:1px;height:23px;background:#ededed"></div>
<div class="a" style="left:337px;top:399px;width:1px;height:23px;background:#ededed"></div>
<div class="a" style="left:414px;top:399px;width:1px;height:23px;background:#ededed"></div>
<div class="a" style="left:534px;top:399px;width:1px;height:23px;background:#ededed"></div>
<div class="a" style="left:654px;top:399px;width:1px;height:23px;background:#ededed"></div>
<div class="a" style="left:118px;top:403px;width:13px;height:13px;border:1px solid #7e7e7e;box-shadow:inset 0 0 0 1px #fff;background:linear-gradient(135deg,#c4c8cf,#f4f4f4 75%)"></div>
<div class="s " style="right:586px;top:403px;"><i class=w6>3</i></div>
<svg style="left:182px;top:403px" width="14" height="16" viewBox="0 0 14 16"><defs><linearGradient id="bk" x1="0" y1="0" x2="1" y2="1"><stop offset="0" stop-color="#a6c8ea"/><stop offset="1" stop-color="#4379bd"/></linearGradient></defs><path d="M1 0H13.5V15L12.5 16H0V1Z" fill="#2b5596"/><rect x="1.2" y="1.8" width="10.8" height="1.2" fill="#f2f6fb"/><rect x="1.2" y="3" width="10.8" height="12" fill="url(#bk)"/><rect x="1.2" y="3" width="1" height="12" fill="#cfe2f5" opacity="0.7"/><rect x="4" y="6" width="5" height="1" fill="#eef5fc"/></svg>
<div class="s " style="left:211px;top:403px;"><i class=w6>3</i><i class=w3>.</i><i class=w6>3</i></div>
<div class="s " style="left:266px;top:403px;"><i class=w7>E</i><i class=w2>i</i><i class=w6>n</i><i class=w3>f</i><i class=w6>ü</i><i class=w6>h</i><i class=w4>r</i><i class=w6>u</i><i class=w6>n</i><i class=w6>g</i></div>
<div class="s " style="left:344px;top:403px;"><i class=w6>o</i><i class=w3>f</i><i class=w3>f</i><i class=w6>e</i><i class=w6>n</i><i class=w6>e</i><i class=w6>s</i><i class=w3> </i><i class=w7>A</i><i class=w6>n</i><i class=w11>…</i></div>
<div class="s " style="right:226px;top:403px;"><i class=w6>0</i><i class=w6>2</i><i class=w3>.</i><i class=w6>0</i><i class=w6>9</i><i class=w3>.</i><i class=w6>2</i><i class=w6>0</i><i class=w6>1</i><i class=w6>1</i></div>
<div class="s " style="right:106px;top:403px;"><i class=w6>0</i><i class=w6>8</i><i class=w3>.</i><i class=w6>0</i><i class=w6>9</i><i class=w3>.</i><i class=w6>2</i><i class=w6>0</i><i class=w6>1</i><i class=w6>1</i></div>
<div class="a" style="left:113px;top:448px;width:620px;height:8px;background:#e8e8e8"></div>
<div class="a" style="left:113px;top:447px;width:605px;height:1px;background:#d0d0d0"></div>
<div class="a" style="left:113px;top:456px;width:607px;height:304px;border:1px solid #d0d0d0;background:#fff"></div>
<div class="a" style="left:114px;top:457px;width:605px;height:27px;border-top:1px solid #fbfbfb;background:linear-gradient(#f2f2f2,#e9e9e9);border-bottom:1px solid #d0d0d0"></div>
<svg style="left:119px;top:462px" width="16" height="16" viewBox="0 0 16 16"><defs><linearGradient id="gg" x1="0" y1="0" x2="0" y2="1"><stop offset="0" stop-color="#aaaaaa"/><stop offset="1" stop-color="#5e5e5e"/></linearGradient></defs><g transform="translate(7.9,7.6)"><path d="M4.99 -2.07 L5.22 -1.40 L7.46 -1.45 L7.46 1.45 L5.22 1.40 L4.99 2.07 L4.68 2.70 L6.30 4.25 L4.25 6.30 L2.70 4.68 L2.07 4.99 L1.40 5.22 L1.45 7.46 L-1.45 7.46 L-1.40 5.22 L-2.07 4.99 L-2.70 4.68 L-4.25 6.30 L-6.30 4.25 L-4.68 2.70 L-4.99 2.07 L-5.22 1.40 L-7.46 1.45 L-7.46 -1.45 L-5.22 -1.40 L-4.99 -2.07 L-4.68 -2.70 L-6.30 -4.25 L-4.25 -6.30 L-2.70 -4.68 L-2.07 -4.99 L-1.40 -5.22 L-1.45 -7.46 L1.45 -7.46 L1.40 -5.22 L2.07 -4.99 L2.70 -4.68 L4.25 -6.30 L6.30 -4.25 L4.68 -2.70Z" fill="#d4d4d4" stroke="url(#gg)" stroke-width="1"/><circle r="2.8" fill="#ededed" stroke="#a0a0a0" stroke-width="1"/></g></svg>
<svg style="left:137px;top:469px" width="5" height="3" viewBox="0 0 5 3"><g shape-rendering="crispEdges" fill="#000"><rect x="0" y="0" width="5" height="1"/><rect x="1" y="1" width="3" height="1"/><rect x="2" y="2" width="1" height="1"/></g></svg>
<svg style="left:154px;top:464px" width="10" height="11" viewBox="0 0 10 11"><rect x="0.4" y="0.4" width="2.4" height="10.2" fill="#3a70d8" stroke="#173f9c" stroke-width="0.8"/><path d="M9.6 0.4V10.6L4.2 5.5Z" fill="#3f80e8" stroke="#1c4cc0" stroke-width="0.8" stroke-linejoin="round"/></svg>
<svg style="left:177px;top:464px" width="6" height="11" viewBox="0 0 6 11"><path d="M5.6 0.4V10.6L0.4 5.5Z" fill="#3f80e8" stroke="#1c4cc0" stroke-width="0.8" stroke-linejoin="round"/></svg>
<div class="a" style="left:195px;top:464px;width:1px;height:13px;background:#a5c3ea"></div>
<div class="s " style="left:202px;top:464px;"><i class=w7>S</i><i class=w6>e</i><i class=w2>i</i><i class=w3>t</i><i class=w6>e</i></div>
<div class="a" style="left:228px;top:460px;width:38px;height:20px;border:1px solid #b5b8c8;background:linear-gradient(#e6e8ec,#fff 9px)"></div>
<div class="s " style="right:496px;top:463px;"><i class=w6>1</i></div>
<div class="s " style="left:268px;top:464px;"><i class=w6>v</i><i class=w6>o</i><i class=w6>n</i><i class=w3> </i><i class=w6>1</i></div>
<div class="a" style="left:300px;top:464px;width:1px;height:13px;background:#a5c3ea"></div>
<svg style="left:313px;top:464px" width="6" height="11" viewBox="0 0 6 11"><path d="M0.4 0.4V10.6L5.6 5.5Z" fill="#3f80e8" stroke="#1c4cc0" stroke-width="0.8" stroke-linejoin="round"/></svg>
<svg style="left:333px;top:464px" width="10" height="11" viewBox="0 0 10 11"><path d="M0.4 0.4V10.6L5.8 5.5Z" fill="#3f80e8" stroke="#1c4cc0" stroke-width="0.8" stroke-linejoin="round"/><rect x="7.2" y="0.4" width="2.4" height="10.2" fill="#3a70d8" stroke="#173f9c" stroke-width="0.8"/></svg>
<div class="a" style="left:352px;top:464px;width:1px;height:13px;background:#a5c3ea"></div>
<svg style="left:359px;top:461px" width="17" height="17" viewBox="0 0 17 17"><path d="M4 5.9Q8.8 -1 14.4 6.4L11.8 7.6Q8.8 2.4 4 5.9Z" fill="#3a8aec" stroke="#1f64d0" stroke-width="0.6"/><path d="M15.9 4.1V9.4H10.2Z" fill="#7cbaf8" stroke="#1f64d0" stroke-width="0.8" stroke-linejoin="round"/><path d="M13.9 12.3Q9 19 2.8 10.8L5.6 10.2Q9.2 15.4 13.9 12.3Z" fill="#3a8aec" stroke="#1f64d0" stroke-width="0.6"/><path d="M2.3 13.9V8.6H8Z" fill="#7cbaf8" stroke="#1f64d0" stroke-width="0.8" stroke-linejoin="round"/></svg>
<div class="a" style="left:382px;top:464px;width:1px;height:13px;background:#a5c3ea"></div>
<div class="a" style="left:387px;top:460px;width:86px;height:20px;border:1px solid #b5b8c8;background:linear-gradient(#e6e8ec,#fff 9px)"></div>
<div class="a" style="left:472px;top:460px;width:18px;height:20px;border:1px solid #b5b8c8;border-left:none;background:linear-gradient(#f4f4f4,#e4e4e4 50%,#d8d8d8)"></div>
<svg style="left:477px;top:466px" width="9" height="9" viewBox="0 0 9 9"><path d="M0.8 0.8L8.2 8.2M8.2 0.8L0.8 8.2" stroke="#3a78c0" stroke-width="1.8"/></svg>
<div class="a" style="left:489px;top:460px;width:18px;height:20px;border:1px solid #b5b8c8;border-radius:0 2px 0 0;background:linear-gradient(#f4f4f4,#e4e4e4 50%,#d8d8d8)"></div>
<svg style="left:491px;top:463px" width="13" height="13" viewBox="0 0 13 13"><circle cx="8" cy="5" r="3.8" fill="#e8f0fa" stroke="#2f6fc0" stroke-width="1.8"/><path d="M5.2 7.8L1 12" stroke="#1d4f9a" stroke-width="2.2"/></svg>
<div class="s " style="right:43px;top:464px;"><i class=w6>1</i><i class=w3> </i><i class=w4>-</i><i class=w3> </i><i class=w6>1</i><i class=w6>3</i><i class=w3> </i><i class=w3>/</i><i class=w3> </i><i class=w6>1</i><i class=w6>3</i></div>
<div class="a" style="left:114px;top:484px;width:605px;height:25px;background:linear-gradient(#f9f9f9 0,#f9f9f9 46%,#eeeff1 50%,#e9eaec 100%);border-bottom:1px solid #d0d0d0"></div>
<div class="a" style="left:134px;top:484px;width:1px;height:24px;background:#d0d0d0"></div>
<div class="a" style="left:135px;top:484px;width:1px;height:24px;background:#fbfbfb"></div>
<div class="a" style="left:178px;top:484px;width:1px;height:24px;background:#d0d0d0"></div>
<div class="a" style="left:179px;top:484px;width:1px;height:24px;background:#fbfbfb"></div>
<div class="a" style="left:213px;top:484px;width:1px;height:24px;background:#d0d0d0"></div>
<div class="a" style="left:214px;top:484px;width:1px;height:24px;background:#fbfbfb"></div>
<div class="a" style="left:327px;top:484px;width:1px;height:24px;background:#d0d0d0"></div>
<div class="a" style="left:328px;top:484px;width:1px;height:24px;background:#fbfbfb"></div>
<div class="s " style="left:220px;top:490px;color:#222"><i class=w7>V</i><i class=w6>o</i><i class=w4>r</i><i class=w6>g</i><i class=w6>a</i><i class=w6>n</i><i class=w6>g</i><i class=w4>-</i><i class=w8>N</i><i class=w6>u</i><i class=w9>m</i><i class=w9>m</i><i class=w6>e</i><i class=w4>r</i></div>
<div class="a" style="left:692px;top:484px;width:1px;height:24px;background:#d0d0d0"></div>
<div class="a" style="left:693px;top:484px;width:1px;height:24px;background:#fbfbfb"></div>
<div class="s " style="left:334px;top:490px;color:#222"><i class=w7>B</i><i class=w6>e</i><i class=w6>z</i><i class=w6>e</i><i class=w2>i</i><i class=w6>c</i><i class=w6>h</i><i class=w6>n</i><i class=w6>u</i><i class=w6>n</i><i class=w6>g</i></div>
<div class="a" style="left:118px;top:490px;width:13px;height:13px;border:1px solid #7e7e7e;box-shadow:inset 0 0 0 1px #fff;background:linear-gradient(135deg,#c4c8cf,#f4f4f4 75%)"></div>
<svg style="left:147px;top:490px" width="13" height="14" viewBox="0 0 13 14"><g fill="#6c9ee8" shape-rendering="crispEdges"><rect x="1" y="0" width="1" height="4"/><rect x="0" y="1" width="1" height="1"/><rect x="0" y="3" width="3" height="1"/><rect x="0" y="5" width="2" height="1"/><rect x="2" y="6" width="1" height="1"/><rect x="1" y="7" width="1" height="1"/><rect x="0" y="8" width="3" height="1"/><rect x="0" y="10" width="3" height="1"/><rect x="2" y="11" width="1" height="1"/><rect x="1" y="12" width="2" height="1"/><rect x="0" y="13" width="3" height="1"/></g><g fill="#2a2a2a" shape-rendering="crispEdges"><rect x="5" y="2" width="8" height="1"/><rect x="5" y="7" width="8" height="1"/><rect x="5" y="12" width="8" height="1"/></g></svg>
<div class="a" style="left:114px;top:509px;width:579px;height:24px;background:#fff;border-bottom:1px solid #ededed;border-top:1px solid #fff"></div>
<div class="a" style="left:114px;top:509px;width:20px;height:23px;background:linear-gradient(90deg,#f6f6f6,#ececec)"></div>
<div class="a" style="left:133px;top:509px;width:1px;height:23px;background:#e2e2e2"></div>
<div class="a" style="left:178px;top:509px;width:1px;height:23px;background:#ededed"></div>
<div class="a" style="left:213px;top:509px;width:1px;height:23px;background:#ededed"></div>
<div class="a" style="left:327px;top:509px;width:1px;height:23px;background:#ededed"></div>
<div class="a" style="left:692px;top:509px;width:1px;height:23px;background:#ededed"></div>
<div class="a" style="left:118px;top:513px;width:13px;height:13px;border:1px solid #7e7e7e;box-shadow:inset 0 0 0 1px #fff;background:linear-gradient(135deg,#c4c8cf,#f4f4f4 75%)"></div>
<div class="s " style="right:582px;top:513px;"><i class=w6>1</i></div>
<svg style="left:186px;top:513px" width="14" height="16" viewBox="0 0 14 16"><defs><linearGradient id="tl" x1="0" y1="0" x2="1" y2="1"><stop offset="0" stop-color="#bff0f0"/><stop offset="0.5" stop-color="#3fb3c4"/><stop offset="1" stop-color="#1d7f9c"/></linearGradient></defs><rect x="0.5" y="2.5" width="13" height="13" fill="#fdf9e3" stroke="#6a6a6a" stroke-width="0.9"/><path d="M4.4 0.5H9.6L10.8 3.6H3.2Z" fill="#58a8f0" stroke="#1d3f7a" stroke-width="0.8"/><path d="M4.8 5.6C3.6 5.6 3.2 7.4 4 8.6C2.6 9.6 2.2 11.5 2.2 14.4H7.4C7.4 11.5 7 9.6 5.6 8.6C6.4 7.4 6 5.6 4.8 5.6Z" fill="url(#tl)" stroke="#6b58b8" stroke-width="0.6"/><path d="M9.9 4.9C8.8 4.9 8.4 6.5 9.1 7.6C7.9 8.5 7.6 10.2 7.6 12.8H12.2C12.2 10.2 11.9 8.5 10.7 7.6C11.4 6.5 11 4.9 9.9 4.9Z" fill="url(#tl)" stroke="#6b58b8" stroke-width="0.6"/></svg>
<div class="s " style="left:220px;top:513px;"><i class=w6>3</i><i class=w4>-</i><i class=w6>1</i></div>
<div class="s " style="left:334px;top:513px;"><i class=w7>A</i><i class=w2>l</i><i class=w2>l</i><i class=w6>g</i><i class=w6>e</i><i class=w9>m</i><i class=w6>e</i><i class=w2>i</i><i class=w6>n</i><i class=w6>e</i><i class=w3> </i><i class=w7>T</i><i class=w6>ä</i><i class=w3>t</i><i class=w2>i</i><i class=w6>g</i><i class=w6>k</i><i class=w6>e</i><i class=w2>i</i><i class=w3>t</i></div>
<div class="a" style="left:114px;top:533px;width:579px;height:24px;background:#fafafa;border-bottom:1px solid #ededed;border-top:1px solid #fff"></div>
<div class="a" style="left:114px;top:533px;width:20px;height:23px;background:linear-gradient(90deg,#f6f6f6,#ececec)"></div>
<div class="a" style="left:133px;top:533px;width:1px;height:23px;background:#e2e2e2"></div>
<div class="a" style="left:178px;top:533px;width:1px;height:23px;background:#ededed"></div>
<div class="a" style="left:213px;top:533px;width:1px;height:23px;background:#ededed"></div>
<div class="a" style="left:327px;top:533px;width:1px;height:23px;background:#ededed"></div>
<div class="a" style="left:692px;top:533px;width:1px;height:23px;background:#ededed"></div>
<div class="a" style="left:118px;top:537px;width:13px;height:13px;border:1px solid #7e7e7e;box-shadow:inset 0 0 0 1px #fff;background:linear-gradient(135deg,#c4c8cf,#f4f4f4 75%)"></div>
<div class="s " style="right:582px;top:537px;"><i class=w6>2</i></div>
<svg style="left:186px;top:537px" width="14" height="16" viewBox="0 0 14 16"><defs><linearGradient id="tl" x1="0" y1="0" x2="1" y2="1"><stop offset="0" stop-color="#bff0f0"/><stop offset="0.5" stop-color="#3fb3c4"/><stop offset="1" stop-color="#1d7f9c"/></linearGradient></defs><rect x="0.5" y="2.5" width="13" height="13" fill="#fdf9e3" stroke="#6a6a6a" stroke-width="0.9"/><path d="M4.4 0.5H9.6L10.8 3.6H3.2Z" fill="#58a8f0" stroke="#1d3f7a" stroke-width="0.8"/><path d="M4.8 5.6C3.6 5.6 3.2 7.4 4 8.6C2.6 9.6 2.2 11.5 2.2 14.4H7.4C7.4 11.5 7 9.6 5.6 8.6C6.4 7.4 6 5.6 4.8 5.6Z" fill="url(#tl)" stroke="#6b58b8" stroke-width="0.6"/><path d="M9.9 4.9C8.8 4.9 8.4 6.5 9.1 7.6C7.9 8.5 7.6 10.2 7.6 12.8H12.2C12.2 10.2 11.9 8.5 10.7 7.6C11.4 6.5 11 4.9 9.9 4.9Z" fill="url(#tl)" stroke="#6b58b8" stroke-width="0.6"/></svg>
<div class="s " style="left:220px;top:537px;"><i class=w6>3</i><i class=w4>-</i><i class=w6>1</i><i class=w6>0</i></div>
<div class="s " style="left:334px;top:537px;"><i class=w7>V</i><i class=w6>e</i><i class=w4>r</i><i class=w3>t</i><i class=w4>r</i><i class=w2>i</i><i class=w6>e</i><i class=w6>b</i><i class=w3> </i><i class=w7>&amp;</i><i class=w3> </i><i class=w9>M</i><i class=w6>a</i><i class=w4>r</i><i class=w6>k</i><i class=w6>e</i><i class=w3>t</i><i class=w2>i</i><i class=w6>n</i><i class=w6>g</i></div>
<div class="a" style="left:114px;top:557px;width:579px;height:24px;background:#fff;border-bottom:1px solid #ededed;border-top:1px solid #fff"></div>
<div class="a" style="left:114px;top:557px;width:20px;height:23px;background:linear-gradient(90deg,#f6f6f6,#ececec)"></div>
<div class="a" style="left:133px;top:557px;width:1px;height:23px;background:#e2e2e2"></div>
<div class="a" style="left:178px;top:557px;width:1px;height:23px;background:#ededed"></div>
<div class="a" style="left:213px;top:557px;width:1px;height:23px;background:#ededed"></div>
<div class="a" style="left:327px;top:557px;width:1px;height:23px;background:#ededed"></div>
<div class="a" style="left:692px;top:557px;width:1px;height:23px;background:#ededed"></div>
<div class="a" style="left:118px;top:561px;width:13px;height:13px;border:1px solid #7e7e7e;box-shadow:inset 0 0 0 1px #fff;background:linear-gradient(135deg,#c4c8cf,#f4f4f4 75%)"></div>
<div class="s " style="right:582px;top:561px;"><i class=w6>3</i></div>
<svg style="left:186px;top:561px" width="14" height="16" viewBox="0 0 14 16"><defs><linearGradient id="tl" x1="0" y1="0" x2="1" y2="1"><stop offset="0" stop-color="#bff0f0"/><stop offset="0.5" stop-color="#3fb3c4"/><stop offset="1" stop-color="#1d7f9c"/></linearGradient></defs><rect x="0.5" y="2.5" width="13" height="13" fill="#fdf9e3" stroke="#6a6a6a" stroke-width="0.9"/><path d="M4.4 0.5H9.6L10.8 3.6H3.2Z" fill="#58a8f0" stroke="#1d3f7a" stroke-width="0.8"/><path d="M4.8 5.6C3.6 5.6 3.2 7.4 4 8.6C2.6 9.6 2.2 11.5 2.2 14.4H7.4C7.4 11.5 7 9.6 5.6 8.6C6.4 7.4 6 5.6 4.8 5.6Z" fill="url(#tl)" stroke="#6b58b8" stroke-width="0.6"/><path d="M9.9 4.9C8.8 4.9 8.4 6.5 9.1 7.6C7.9 8.5 7.6 10.2 7.6 12.8H12.2C12.2 10.2 11.9 8.5 10.7 7.6C11.4 6.5 11 4.9 9.9 4.9Z" fill="url(#tl)" stroke="#6b58b8" stroke-width="0.6"/></svg>
<div class="s " style="left:220px;top:561px;"><i class=w6>3</i><i class=w4>-</i><i class=w6>1</i><i class=w6>1</i></div>
<div class="s " style="left:334px;top:561px;"><i class=w7>A</i><i class=w6>d</i><i class=w9>m</i><i class=w2>i</i><i class=w6>n</i><i class=w6>s</i><i class=w6>c</i><i class=w6>h</i><i class=w6>u</i><i class=w2>l</i><i class=w6>u</i><i class=w6>n</i><i class=w6>g</i></div>
<div class="a" style="left:114px;top:581px;width:579px;height:24px;background:#fafafa;border-bottom:1px solid #ededed;border-top:1px solid #fff"></div>
<div class="a" style="left:114px;top:581px;width:20px;height:23px;background:linear-gradient(90deg,#f6f6f6,#ececec)"></div>
<div class="a" style="left:133px;top:581px;width:1px;height:23px;background:#e2e2e2"></div>
<div class="a" style="left:178px;top:581px;width:1px;height:23px;background:#ededed"></div>
<div class="a" style="left:213px;top:581px;width:1px;height:23px;background:#ededed"></div>
<div class="a" style="left:327px;top:581px;width:1px;height:23px;background:#ededed"></div>
<div class="a" style="left:692px;top:581px;width:1px;height:23px;background:#ededed"></div>
<div class="a" style="left:118px;top:585px;width:13px;height:13px;border:1px solid #7e7e7e;box-shadow:inset 0 0 0 1px #fff;background:linear-gradient(135deg,#c4c8cf,#f4f4f4 75%)"></div>
<div class="s " style="right:582px;top:585px;"><i class=w6>4</i></div>
<svg style="left:186px;top:585px" width="14" height="16" viewBox="0 0 14 16"><defs><linearGradient id="tl" x1="0" y1="0" x2="1" y2="1"><stop offset="0" stop-color="#bff0f0"/><stop offset="0.5" stop-color="#3fb3c4"/><stop offset="1" stop-color="#1d7f9c"/></linearGradient></defs><rect x="0.5" y="2.5" width="13" height="13" fill="#fdf9e3" stroke="#6a6a6a" stroke-width="0.9"/><path d="M4.4 0.5H9.6L10.8 3.6H3.2Z" fill="#58a8f0" stroke="#1d3f7a" stroke-width="0.8"/><path d="M4.8 5.6C3.6 5.6 3.2 7.4 4 8.6C2.6 9.6 2.2 11.5 2.2 14.4H7.4C7.4 11.5 7 9.6 5.6 8.6C6.4 7.4 6 5.6 4.8 5.6Z" fill="url(#tl)" stroke="#6b58b8" stroke-width="0.6"/><path d="M9.9 4.9C8.8 4.9 8.4 6.5 9.1 7.6C7.9 8.5 7.6 10.2 7.6 12.8H12.2C12.2 10.2 11.9 8.5 10.7 7.6C11.4 6.5 11 4.9 9.9 4.9Z" fill="url(#tl)" stroke="#6b58b8" stroke-width="0.6"/></svg>
<div class="s " style="left:220px;top:585px;"><i class=w6>3</i><i class=w4>-</i><i class=w6>1</i><i class=w6>2</i></div>
<div class="s " style="left:334px;top:585px;"><i class=w7>K</i><i class=w6>o</i><i class=w6>n</i><i class=w6>z</i><i class=w6>e</i><i class=w6>p</i><i class=w3>t</i><i class=w6>g</i><i class=w6>e</i><i class=w6>s</i><i class=w6>p</i><i class=w4>r</i><i class=w6>ä</i><i class=w6>c</i><i class=w6>h</i></div>
<div class="a" style="left:114px;top:605px;width:579px;height:24px;background:#fff;border-bottom:1px solid #ededed;border-top:1px solid #fff"></div>
<div class="a" style="left:114px;top:605px;width:20px;height:23px;background:linear-gradient(90deg,#f6f6f6,#ececec)"></div>
<div class="a" style="left:133px;top:605px;width:1px;height:23px;background:#e2e2e2"></div>
<div class="a" style="left:178px;top:605px;width:1px;height:23px;background:#ededed"></div>
<div class="a" style="left:213px;top:605px;width:1px;height:23px;background:#ededed"></div>
<div class="a" style="left:327px;top:605px;width:1px;height:23px;background:#ededed"></div>
<div class="a" style="left:692px;top:605px;width:1px;height:23px;background:#ededed"></div>
<div class="a" style="left:118px;top:609px;width:13px;height:13px;border:1px solid #7e7e7e;box-shadow:inset 0 0 0 1px #fff;background:linear-gradient(135deg,#c4c8cf,#f4f4f4 75%)"></div>
<div class="s " style="right:582px;top:609px;"><i class=w6>5</i></div>
<svg style="left:186px;top:609px" width="14" height="16" viewBox="0 0 14 16"><defs><linearGradient id="tl" x1="0" y1="0" x2="1" y2="1"><stop offset="0" stop-color="#bff0f0"/><stop offset="0.5" stop-color="#3fb3c4"/><stop offset="1" stop-color="#1d7f9c"/></linearGradient></defs><rect x="0.5" y="2.5" width="13" height="13" fill="#fdf9e3" stroke="#6a6a6a" stroke-width="0.9"/><path d="M4.4 0.5H9.6L10.8 3.6H3.2Z" fill="#58a8f0" stroke="#1d3f7a" stroke-width="0.8"/><path d="M4.8 5.6C3.6 5.6 3.2 7.4 4 8.6C2.6 9.6 2.2 11.5 2.2 14.4H7.4C7.4 11.5 7 9.6 5.6 8.6C6.4 7.4 6 5.6 4.8 5.6Z" fill="url(#tl)" stroke="#6b58b8" stroke-width="0.6"/><path d="M9.9 4.9C8.8 4.9 8.4 6.5 9.1 7.6C7.9 8.5 7.6 10.2 7.6 12.8H12.2C12.2 10.2 11.9 8.5 10.7 7.6C11.4 6.5 11 4.9 9.9 4.9Z" fill="url(#tl)" stroke="#6b58b8" stroke-width="0.6"/></svg>
<div class="s " style="left:220px;top:609px;"><i class=w6>3</i><i class=w4>-</i><i class=w6>1</i><i class=w6>3</i></div>
<div class="s " style="left:334px;top:609px;"><i class=w7>P</i><i class=w4>r</i><i class=w6>o</i><i class=w2>j</i><i class=w6>e</i><i class=w6>c</i><i class=w3>t</i><i class=w2>i</i><i class=w2>l</i><i class=w6>e</i><i class=w4>-</i><i class=w7>V</i><i class=w6>e</i><i class=w4>r</i><i class=w6>s</i><i class=w2>i</i><i class=w6>o</i><i class=w6>n</i></div>
<div class="a" style="left:114px;top:629px;width:579px;height:24px;background:#fafafa;border-bottom:1px solid #ededed;border-top:1px solid #fff"></div>
<div class="a" style="left:114px;top:629px;width:20px;height:23px;background:linear-gradient(90deg,#f6f6f6,#ececec)"></div>
<div class="a" style="left:133px;top:629px;width:1px;height:23px;background:#e2e2e2"></div>
<div class="a" style="left:178px;top:629px;width:1px;height:23px;background:#ededed"></div>
<div class="a" style="left:213px;top:629px;width:1px;height:23px;background:#ededed"></div>
<div class="a" style="left:327px;top:629px;width:1px;height:23px;background:#ededed"></div>
<div class="a" style="left:692px;top:629px;width:1px;height:23px;background:#ededed"></div>
<div class="a" style="left:118px;top:633px;width:13px;height:13px;border:1px solid #7e7e7e;box-shadow:inset 0 0 0 1px #fff;background:linear-gradient(135deg,#c4c8cf,#f4f4f4 75%)"></div>
<div class="s " style="right:582px;top:633px;"><i class=w6>6</i></div>
<svg style="left:186px;top:633px" width="14" height="16" viewBox="0 0 14 16"><defs><linearGradient id="tl" x1="0" y1="0" x2="1" y2="1"><stop offset="0" stop-color="#bff0f0"/><stop offset="0.5" stop-color="#3fb3c4"/><stop offset="1" stop-color="#1d7f9c"/></linearGradient></defs><rect x="0.5" y="2.5" width="13" height="13" fill="#fdf9e3" stroke="#6a6a6a" stroke-width="0.9"/><path d="M4.4 0.5H9.6L10.8 3.6H3.2Z" fill="#58a8f0" stroke="#1d3f7a" stroke-width="0.8"/><path d="M4.8 5.6C3.6 5.6 3.2 7.4 4 8.6C2.6 9.6 2.2 11.5 2.2 14.4H7.4C7.4 11.5 7 9.6 5.6 8.6C6.4 7.4 6 5.6 4.8 5.6Z" fill="url(#tl)" stroke="#6b58b8" stroke-width="0.6"/><path d="M9.9 4.9C8.8 4.9 8.4 6.5 9.1 7.6C7.9 8.5 7.6 10.2 7.6 12.8H12.2C12.2 10.2 11.9 8.5 10.7 7.6C11.4 6.5 11 4.9 9.9 4.9Z" fill="url(#tl)" stroke="#6b58b8" stroke-width="0.6"/></svg>
<div class="s " style="left:220px;top:633px;"><i class=w6>3</i><i class=w4>-</i><i class=w6>2</i></div>
<div class="s " style="left:334px;top:633px;"><i class=w6>3</i><i class=w4>-</i><i class=w6>2</i></div>
<div class="a" style="left:114px;top:653px;width:579px;height:24px;background:#fff;border-bottom:1px solid #ededed;border-top:1px solid #fff"></div>
<div class="a" style="left:114px;top:653px;width:20px;height:23px;background:linear-gradient(90deg,#f6f6f6,#ececec)"></div>
<div class="a" style="left:133px;top:653px;width:1px;height:23px;background:#e2e2e2"></div>
<div class="a" style="left:178px;top:653px;width:1px;height:23px;background:#ededed"></div>
<div class="a" style="left:213px;top:653px;width:1px;height:23px;background:#ededed"></div>
<div class="a" style="left:327px;top:653px;width:1px;height:23px;background:#ededed"></div>
<div class="a" style="left:692px;top:653px;width:1px;height:23px;background:#ededed"></div>
<div class="a" style="left:118px;top:657px;width:13px;height:13px;border:1px solid #7e7e7e;box-shadow:inset 0 0 0 1px #fff;background:linear-gradient(135deg,#c4c8cf,#f4f4f4 75%)"></div>
<div class="s " style="right:582px;top:657px;"><i class=w6>7</i></div>
<svg style="left:186px;top:657px" width="14" height="16" viewBox="0 0 14 16"><defs><linearGradient id="tl" x1="0" y1="0" x2="1" y2="1"><stop offset="0" stop-color="#bff0f0"/><stop offset="0.5" stop-color="#3fb3c4"/><stop offset="1" stop-color="#1d7f9c"/></linearGradient></defs><rect x="0.5" y="2.5" width="13" height="13" fill="#fdf9e3" stroke="#6a6a6a" stroke-width="0.9"/><path d="M4.4 0.5H9.6L10.8 3.6H3.2Z" fill="#58a8f0" stroke="#1d3f7a" stroke-width="0.8"/><path d="M4.8 5.6C3.6 5.6 3.2 7.4 4 8.6C2.6 9.6 2.2 11.5 2.2 14.4H7.4C7.4 11.5 7 9.6 5.6 8.6C6.4 7.4 6 5.6 4.8 5.6Z" fill="url(#tl)" stroke="#6b58b8" stroke-width="0.6"/><path d="M9.9 4.9C8.8 4.9 8.4 6.5 9.1 7.6C7.9 8.5 7.6 10.2 7.6 12.8H12.2C12.2 10.2 11.9 8.5 10.7 7.6C11.4 6.5 11 4.9 9.9 4.9Z" fill="url(#tl)" stroke="#6b58b8" stroke-width="0.6"/></svg>
<div class="s " style="left:220px;top:657px;"><i class=w6>3</i><i class=w4>-</i><i class=w6>3</i></div>
<div class="s " style="left:334px;top:657px;"><i class=w8>C</i><i class=w6>u</i><i class=w6>s</i><i class=w3>t</i><i class=w6>o</i><i class=w9>m</i><i class=w2>i</i><i class=w6>z</i><i class=w2>i</i><i class=w6>n</i><i class=w6>g</i></div>
<div class="a" style="left:114px;top:677px;width:579px;height:24px;background:#fafafa;border-bottom:1px solid #ededed;border-top:1px solid #fff"></div>
<div class="a" style="left:114px;top:677px;width:20px;height:23px;background:linear-gradient(90deg,#f6f6f6,#ececec)"></div>
<div class="a" style="left:133px;top:677px;width:1px;height:23px;background:#e2e2e2"></div>
<div class="a" style="left:178px;top:677px;width:1px;height:23px;background:#ededed"></div>
<div class="a" style="left:213px;top:677px;width:1px;height:23px;background:#ededed"></div>
<div class="a" style="left:327px;top:677px;width:1px;height:23px;background:#ededed"></div>
<div class="a" style="left:692px;top:677px;width:1px;height:23px;background:#ededed"></div>
<div class="a" style="left:118px;top:681px;width:13px;height:13px;border:1px solid #7e7e7e;box-shadow:inset 0 0 0 1px #fff;background:linear-gradient(135deg,#c4c8cf,#f4f4f4 75%)"></div>
<div class="s " style="right:582px;top:681px;"><i class=w6>8</i></div>
<svg style="left:186px;top:681px" width="14" height="16" viewBox="0 0 14 16"><defs><linearGradient id="tl" x1="0" y1="0" x2="1" y2="1"><stop offset="0" stop-color="#bff0f0"/><stop offset="0.5" stop-color="#3fb3c4"/><stop offset="1" stop-color="#1d7f9c"/></linearGradient></defs><rect x="0.5" y="2.5" width="13" height="13" fill="#fdf9e3" stroke="#6a6a6a" stroke-width="0.9"/><path d="M4.4 0.5H9.6L10.8 3.6H3.2Z" fill="#58a8f0" stroke="#1d3f7a" stroke-width="0.8"/><path d="M4.8 5.6C3.6 5.6 3.2 7.4 4 8.6C2.6 9.6 2.2 11.5 2.2 14.4H7.4C7.4 11.5 7 9.6 5.6 8.6C6.4 7.4 6 5.6 4.8 5.6Z" fill="url(#tl)" stroke="#6b58b8" stroke-width="0.6"/><path d="M9.9 4.9C8.8 4.9 8.4 6.5 9.1 7.6C7.9 8.5 7.6 10.2 7.6 12.8H12.2C12.2 10.2 11.9 8.5 10.7 7.6C11.4 6.5 11 4.9 9.9 4.9Z" fill="url(#tl)" stroke="#6b58b8" stroke-width="0.6"/></svg>
<div class="s " style="left:220px;top:681px;"><i class=w6>3</i><i class=w4>-</i><i class=w6>4</i></div>
<div class="s " style="left:334px;top:681px;"><i class=w9>Q</i><i class=w6>u</i><i class=w6>a</i><i class=w2>l</i><i class=w2>i</i><i class=w3>t</i><i class=w6>ä</i><i class=w3>t</i><i class=w6>s</i><i class=w6>s</i><i class=w2>i</i><i class=w6>c</i><i class=w6>h</i><i class=w6>e</i><i class=w4>r</i><i class=w6>u</i><i class=w6>n</i><i class=w6>g</i></div>
<div class="a" style="left:0px;top:699px;width:757px;height:1px;background:#f0f0f0"></div>
</body></html>
